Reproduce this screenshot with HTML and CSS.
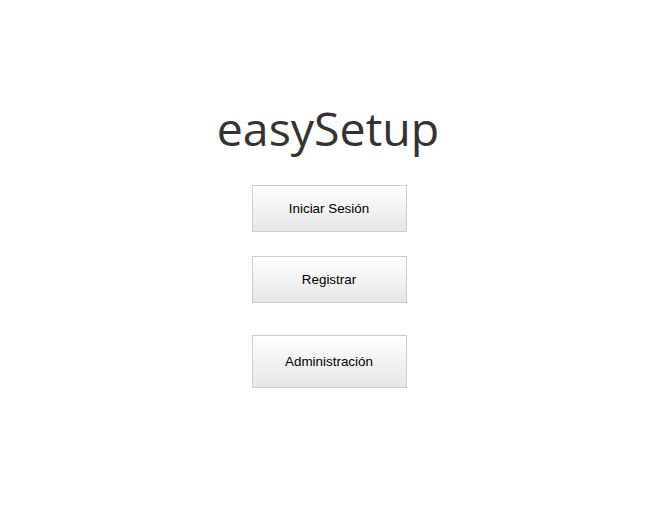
FILE: index.html
```html
<!DOCTYPE html>
<html>
<head>
<meta charset="utf-8">
<link rel="stylesheet" href="styles.css">
</head>
<body>
<main class="page">
  <h1 class="title">easySetup</h1>
  <button class="btn btn-login">Iniciar Sesión</button>
  <button class="btn btn-register">Registrar</button>
  <button class="btn btn-admin">Administración</button>
</main>
</body>
</html>
```
FILE: styles.css
```css
html, body {
  margin: 0;
  padding: 0;
  background: #fff;
}
.page {
  display: flex;
  flex-direction: column;
  align-items: center;
  padding-top: 95px;
}
.title {
  margin: 0;
  font-family: "Open Sans", sans-serif;
  font-weight: 400;
  font-size: 46.5px;
  line-height: 66px;
  height: 66px;
  color: #333;
  margin-left: 1px;
}
.btn {
  width: 155px;
  height: 47px;
  border: 1px solid #ccc;
  background: linear-gradient(#ffffff, #e6e6e6);
  font-family: "Liberation Sans", Arial, sans-serif;
  font-size: 13.4px;
  color: #000;
  padding: 0;
  margin-left: 3px;
}
.btn-login { margin-top: 24px; }
.btn-register { margin-top: 24px; }
.btn-admin { margin-top: 32px; height: 53px; }
```
